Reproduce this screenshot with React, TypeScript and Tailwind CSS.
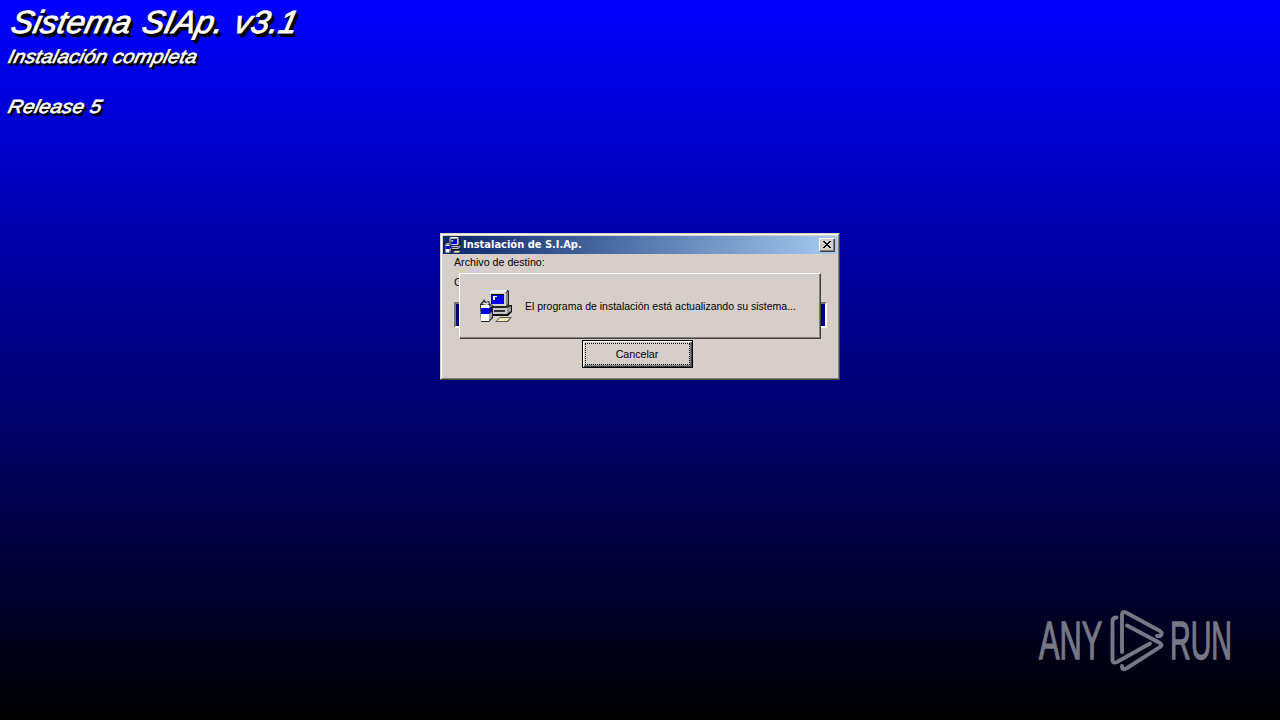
import type { ReactNode } from 'react';

function SetupIcon({ className }: { className: string }) {
  return (
    <svg viewBox="0 0 32 32" className={className}>
      <path d="M9 2l2-2h17l1 1v14l-3 3H10z" fill="#222" />
      <path d="M9 2l2-2h16v1l-2 2H9z" fill="#eee" />
      <path d="M9 3h17v13H9z" fill="#d2d2ca" />
      <path d="M26 3l2-2v13l-2 2z" fill="#888" />
      <path d="M11 4h13v10H11z" fill="#111" />
      <path d="M12 5h12v9H12z" fill="#0000ef" />
      <path d="M13 6h4v1h-2v3h-2z" fill="#fff" />
      <path d="M12 18h14l3-3h3v7l-4 4H12z" fill="#111" />
      <path d="M13 18h14v6H13z" fill="#c6c6c6" />
      <path d="M27 18l4-2v5l-4 3z" fill="#999" />
      <path d="M14 20h11v2H14z" fill="#333" />
      <path d="M20 27h12l-4 5H15z" fill="#555" />
      <path d="M20 28h10l-3 3H17z" fill="#f2efb9" />
      <path d="M0 14l3-3 1-2 2 3 3-1 1 3 3 1v13l-4 4H1z" fill="#222" />
      <path d="M1 15h8v16H1z" fill="#fff" />
      <path d="M9 16l3-1v12l-3 4z" fill="#a5a5a5" />
      <path d="M1 18h8v6H1z" fill="#0000df" />
      <path d="M9 18l3-2v6l-3 2z" fill="#00007b" />
      <path d="M2 14l2-2 2 1 2-1 1 2-2 1z" fill="#ddd" />
    </svg>
  );
}

function Banner({ children, className }: { children: ReactNode; className: string }) {
  return (
    <div
      className={`w-max origin-bottom-left whitespace-nowrap font-['Liberation_Sans',sans-serif] italic text-white ${className}`}
    >
      {children}
    </div>
  );
}

function Watermark() {
  return (
    <div className="absolute left-[1039px] top-[609px] flex h-[63px] w-[192px] items-center text-[#777785]">
      <div className="w-[70px]">
        <div className="w-max origin-left scale-x-[0.57] font-['Liberation_Sans',sans-serif] text-[54px] leading-[63px] [-webkit-text-stroke:1.4px_#777785]">ANY</div>
      </div>
      <svg viewBox="0 0 56 63" className="h-[63px] w-[56px] shrink-0" fill="none" stroke="currentColor" strokeWidth="3.9" strokeLinejoin="round" strokeLinecap="round">
        <path d="M7.500 8.500Q3.500 8.500 3.500 12.500V51Q3.500 55 8 53L41 34.500" />
        <path d="M13 43V6Q13 1.500 17 3.500L51 22Q54.500 25 51 27H48" />
        <path d="M18 16.500L51 34Q54 36 51 38L18 59Q13 62 13 57" />
      </svg>
      <div className="w-[60px] pl-[5px]">
        <div className="w-max origin-left scale-x-[0.53] font-['Liberation_Sans',sans-serif] text-[54px] leading-[63px] [-webkit-text-stroke:1.4px_#777785]">RUN</div>
      </div>
    </div>
  );
}

export default function App() {
  return (
    <main className="relative h-[720px] w-[1280px] overflow-hidden bg-linear-to-b/srgb from-[#0000ff] to-black font-['Liberation_Sans',sans-serif]">
      <header className="flex h-[233px] flex-col pl-[7px] pt-[4px]">
        <Banner className="ml-px h-[36px] scale-x-[1.035] -skew-x-12 text-[32px] leading-[37px] [-webkit-text-stroke:0.8px_white] [text-shadow:1px_1px_#000,2px_2px_#000,3px_3px_#000,4px_4px_#000] [word-spacing:2px]">Sistema SIAp. v3.1</Banner>
        <Banner className="-ml-px mt-[5px] h-[22px] scale-x-[1.09] -skew-x-12 text-[19px] leading-[23px] [-webkit-text-stroke:0.6px_white] [text-shadow:1px_1px_#000,2px_2px_#000,3px_3px_#000]">Instalación completa</Banner>
        <Banner className="-ml-px mt-[28px] h-[22px] scale-x-[1.09] -skew-x-12 text-[19px] leading-[23px] [-webkit-text-stroke:0.6px_white] [text-shadow:1px_1px_#000,2px_2px_#000,3px_3px_#000]">Release 5</Banner>
      </header>

      <section className="relative ml-[440px] h-[147px] w-[400px] border border-b-[#404040] border-l-[#d4d0c8] border-r-[#404040] border-t-[#d4d0c8] bg-[#d6cfc9] text-[11px] text-black">
        <div className="h-full border border-b-[#808080] border-l-white border-r-[#808080] border-t-white p-px">
          <div className="flex h-[18px] items-center bg-linear-to-r/srgb from-[#0a246a] to-[#a6caf0] pl-[2px] pr-[2px]">
            <SetupIcon className="size-4 shrink-0" />
            <span className="ml-[2px] flex-1 whitespace-nowrap pt-px font-['DejaVu_Sans',sans-serif] text-[11px] font-bold text-white [font-stretch:75%]">Instalación de S.I.Ap.</span>
            <button className="flex h-[14px] w-4 items-center justify-center border border-b-[#404040] border-l-white border-r-[#404040] border-t-white bg-[#d6cfc9] shadow-[inset_-1px_-1px_#808080]">
              <svg viewBox="0 0 8 7" className="mb-px h-[7px] w-2" shapeRendering="crispEdges">
                <path d="M0 0h2v1h1v1h2V1h1V0h2v1H7v1H6v1H5v1h1v1h1v1h1v1H6V6H5V5H3v1H2v1H0V6h1V5h1V4h1V3H2V2H1V1H0z" fill="#000" />
              </svg>
            </button>
          </div>
          <div className="flex flex-col pl-[11px] pr-[10px]">
            <span className="mt-[2px] h-[13px] w-max origin-left scale-x-[0.97] leading-[13px]">Archivo de destino:</span>
            <span className="mt-[6px] h-[14px] leading-[14px]">C:\</span>
            <div className="mt-[13px] h-[26px] border-2 border-b-white border-l-[#777] border-r-white border-t-[#777] bg-[#000080]" />
            <button className="ml-[128px] mt-[12px] h-[28px] w-[111px] border border-black bg-[#d6cfc9] p-[2px] shadow-[inset_1px_1px_#fff,inset_-1px_-1px_#404040,inset_-2px_-2px_#808080]">
              <span className="flex h-full items-center justify-center border border-dotted border-black"><span className="scale-x-[0.97]">Cancelar</span></span>
            </button>
          </div>
        </div>
        <div className="absolute left-[18px] top-[39px] flex h-[66px] w-[362px] items-center border border-b-[#404040] border-l-white border-r-[#404040] border-t-white bg-[#d6cfc9] pl-[20px] shadow-[inset_-1px_-1px_#808080]">
          <SetupIcon className="size-8 shrink-0" />
          <span className="ml-[13px] w-max origin-left scale-x-[0.955] whitespace-nowrap">El programa de instalación está actualizando su sistema...</span>
        </div>
      </section>
      <Watermark />
    </main>
  );
}
